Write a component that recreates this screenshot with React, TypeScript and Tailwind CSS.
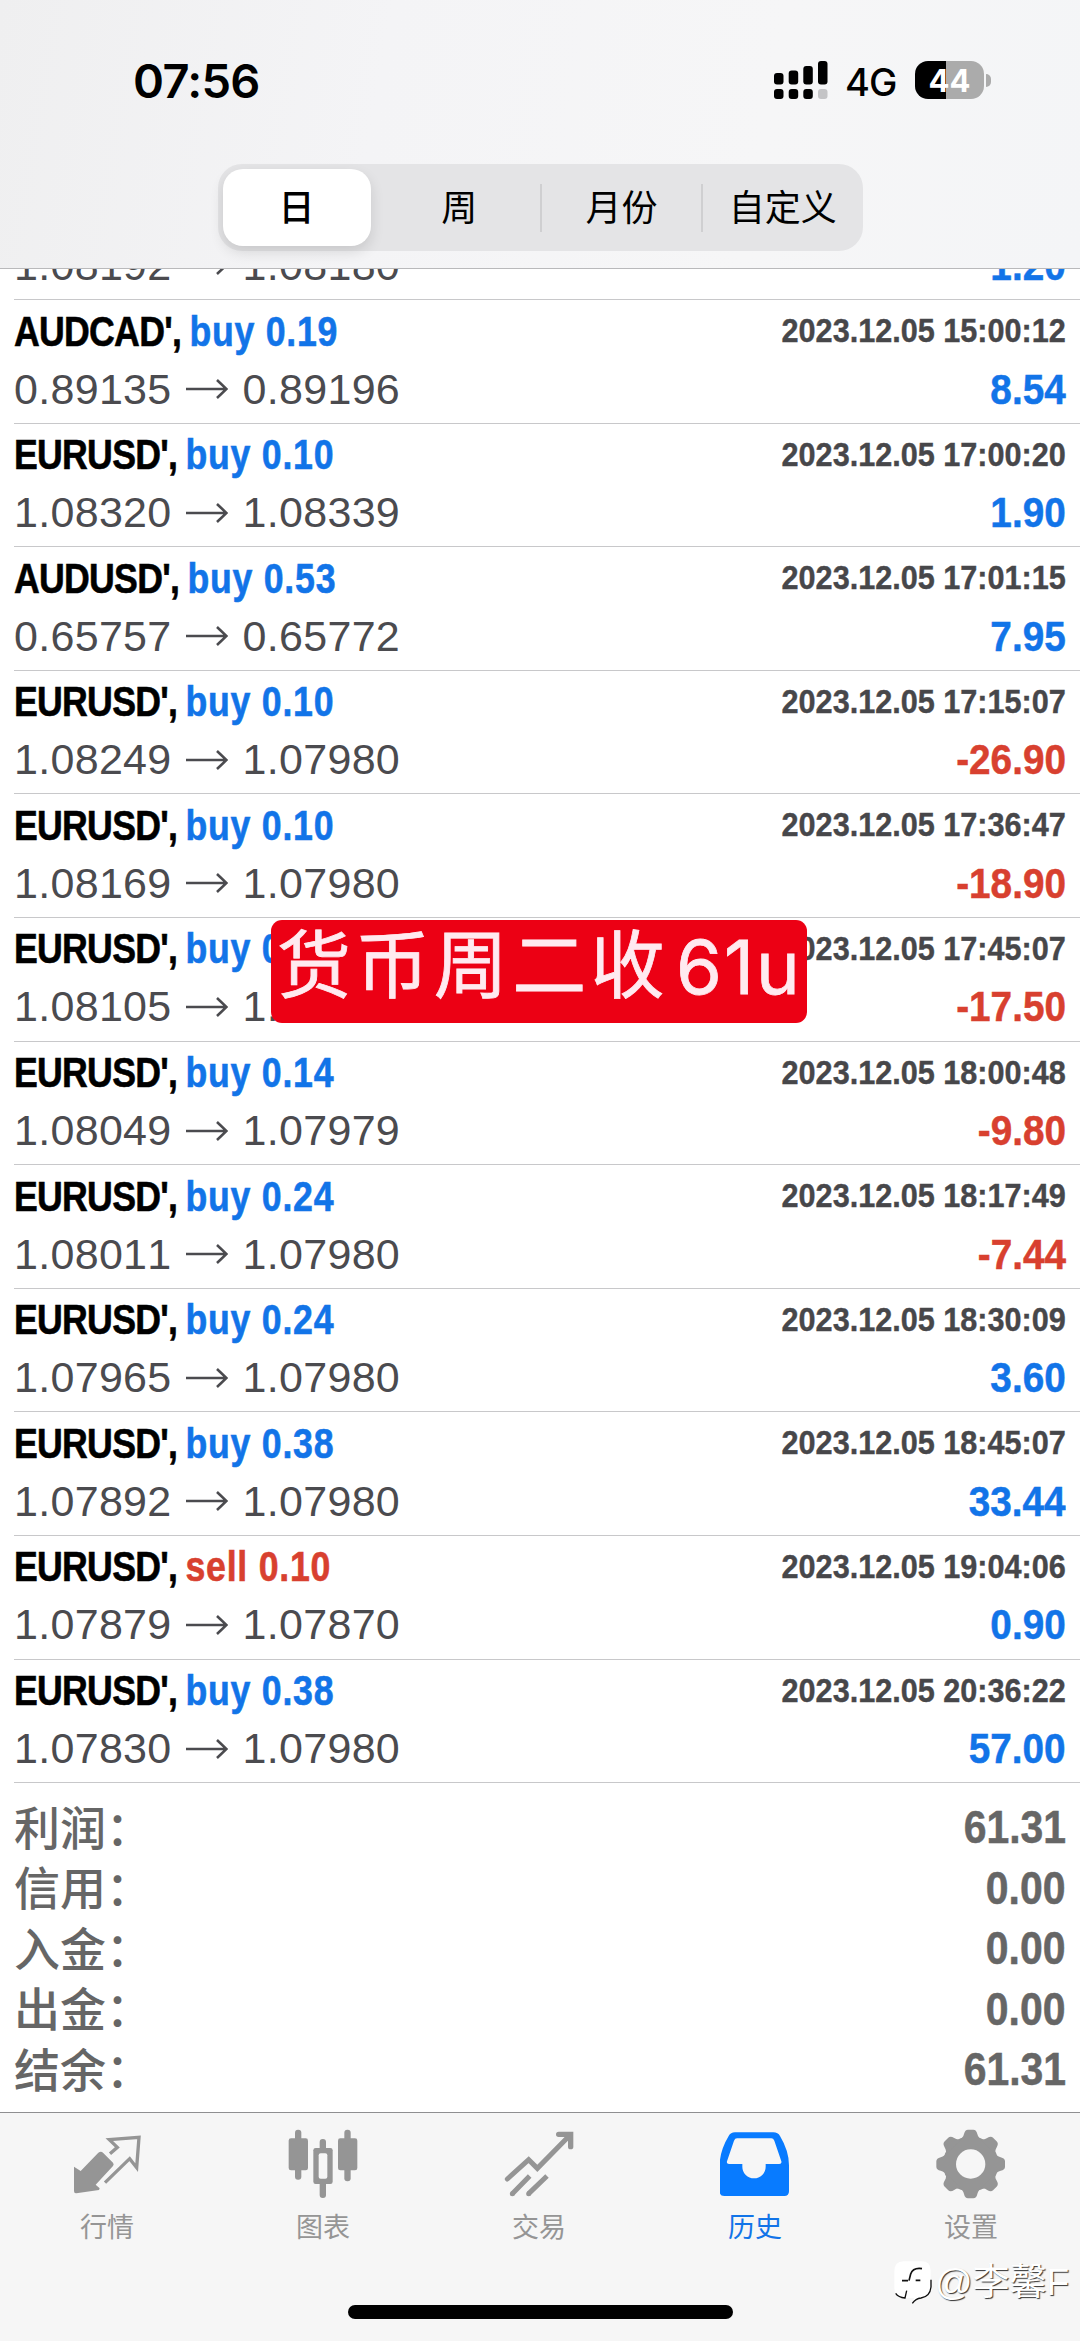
import type { ReactNode } from "react";

type Trade = {
  symbol: string;
  side: "buy" | "sell";
  lots: string;
  open: string;
  close: string;
  time: string;
  profit: string;
};

const trades: Trade[] = [
  { symbol: "AUDCAD'", side: "buy", lots: "0.19", open: "0.89135", close: "0.89196", time: "2023.12.05 15:00:12", profit: "8.54" },
  { symbol: "EURUSD'", side: "buy", lots: "0.10", open: "1.08320", close: "1.08339", time: "2023.12.05 17:00:20", profit: "1.90" },
  { symbol: "AUDUSD'", side: "buy", lots: "0.53", open: "0.65757", close: "0.65772", time: "2023.12.05 17:01:15", profit: "7.95" },
  { symbol: "EURUSD'", side: "buy", lots: "0.10", open: "1.08249", close: "1.07980", time: "2023.12.05 17:15:07", profit: "-26.90" },
  { symbol: "EURUSD'", side: "buy", lots: "0.10", open: "1.08169", close: "1.07980", time: "2023.12.05 17:36:47", profit: "-18.90" },
  { symbol: "EURUSD'", side: "buy", lots: "0.10", open: "1.08105", close: "1.07980", time: "2023.12.05 17:45:07", profit: "-17.50" },
  { symbol: "EURUSD'", side: "buy", lots: "0.14", open: "1.08049", close: "1.07979", time: "2023.12.05 18:00:48", profit: "-9.80" },
  { symbol: "EURUSD'", side: "buy", lots: "0.24", open: "1.08011", close: "1.07980", time: "2023.12.05 18:17:49", profit: "-7.44" },
  { symbol: "EURUSD'", side: "buy", lots: "0.24", open: "1.07965", close: "1.07980", time: "2023.12.05 18:30:09", profit: "3.60" },
  { symbol: "EURUSD'", side: "buy", lots: "0.38", open: "1.07892", close: "1.07980", time: "2023.12.05 18:45:07", profit: "33.44" },
  { symbol: "EURUSD'", side: "sell", lots: "0.10", open: "1.07879", close: "1.07870", time: "2023.12.05 19:04:06", profit: "0.90" },
  { symbol: "EURUSD'", side: "buy", lots: "0.38", open: "1.07830", close: "1.07980", time: "2023.12.05 20:36:22", profit: "57.00" },
];

const summary = [
  { label: "利润", value: "61.31" },
  { label: "信用", value: "0.00" },
  { label: "入金", value: "0.00" },
  { label: "出金", value: "0.00" },
  { label: "结余", value: "61.31" },
];

const periods = ["日", "周", "月份", "自定义"];

const blue = "text-[#1274e8]";
const red = "text-[#d8402f]";

const StatusBar = () => (
  <div className="flex h-[160px] items-center justify-between pl-[133px] pr-[89px]">
    <span className="font-['Inter',sans-serif] text-[47px] font-semibold leading-none tracking-[-0.7px]">07:56</span>
    <div className="flex items-center">
      <svg className="h-[38px] w-[54px]" viewBox="0 0 54 38">
        <rect x="0" y="12" width="9.5" height="11.5" rx="3" />
        <rect x="14.7" y="9.5" width="9.5" height="14" rx="3" />
        <rect x="29.3" y="5" width="9.5" height="18.5" rx="3" />
        <rect x="44" y="0" width="9.5" height="23.5" rx="3" />
        <rect x="0" y="28" width="9.5" height="10" rx="3" />
        <rect x="14.7" y="28" width="9.5" height="10" rx="3" />
        <rect x="29.3" y="28" width="9.5" height="10" rx="3" />
        <rect x="44" y="28" width="9.5" height="10" rx="3" fill="#c4c4c6" />
      </svg>
      <span className="ml-[17px] w-[70px] pt-[3px] font-['Inter',sans-serif] text-[38px] font-medium leading-none tracking-[-1px]">4G</span>
      <div className="flex h-[38px] w-[69px] items-center justify-center rounded-[13px] bg-[linear-gradient(90deg,#000_31px,#ababab_31px)]">
        <span className="font-['Inter',sans-serif] text-[31px] font-bold leading-none text-white">44</span>
      </div>
      <div className="ml-[2px] h-[13px] w-[5px] rounded-r-full bg-[#ababab]" />
    </div>
  </div>
);

const Segmented = () => (
  <div className="mx-auto grid h-[87px] w-[645px] grid-cols-4 rounded-[24px] bg-[#e4e4e6] text-[36px] leading-none">
    {periods.map((period, index) => (
      <div key={period} className="flex items-center">
        {index > 1 && <div className="h-[48px] w-[2px] bg-[#cfcfd1]" />}
        <div
          className={
            index === 0
              ? "ml-[5px] flex h-[77px] w-[148px] items-center justify-center rounded-[20px] bg-white pt-[2px] font-medium shadow-[0_6px_14px_rgba(0,0,0,0.12)]"
              : "flex h-full flex-1 items-center justify-center pt-[2px]"
          }
        >
          {period}
        </div>
      </div>
    ))}
  </div>
);

const Arrow = () => (
  <svg className="ml-[14px] mr-[15px] h-[24px] w-[42px]" viewBox="0 0 42 24" fill="none" stroke="#4b4b4f" strokeWidth="2.6">
    <path d="M0 12h40M31 3l9.5 9L31 21" />
  </svg>
);

const PriceLine = ({ open, close, profit }: { open: string; close: string; profit: string }) => (
  <div className="flex h-[58px] items-center justify-between whitespace-nowrap text-[43px] leading-none [font-kerning:none]">
    <div className="flex items-center tracking-[0.3px] text-[#4b4b4f]">
      {open}
      <Arrow />
      {close}
    </div>
    <div
      className={`origin-right scale-x-[0.9] font-bold [-webkit-text-stroke:0.5px_currentColor] ${profit.startsWith("-") ? red : blue}`}
    >
      {profit}
    </div>
  </div>
);

const TradeRow = ({ trade }: { trade: Trade }) => (
  <div className="ml-[14px] h-[123.6px] border-b border-[#c8c8ca] pr-[14px] pt-[2px]">
    <div className="flex h-[58px] items-center justify-between whitespace-nowrap font-bold [font-kerning:none]">
      <div className="origin-left scale-x-[0.83] text-[43px] leading-none [-webkit-text-stroke:0.6px_currentColor]">
        <span className="tracking-[-0.9px]">{trade.symbol},</span>
        <span className={`ml-[10px] tracking-[0.9px] ${trade.side === "buy" ? blue : red}`}>
          {trade.side} {trade.lots}
        </span>
      </div>
      <div className="origin-right scale-x-[0.9] pb-[2px] text-[34px] leading-none text-[#47474a] [-webkit-text-stroke:0.4px_currentColor]">
        {trade.time}
      </div>
    </div>
    <PriceLine open={trade.open} close={trade.close} profit={trade.profit} />
  </div>
);

const QuotesIcon = () => (
  <svg className="h-[72px] w-[72px]" viewBox="216 115 216 216">
    <path d="M222 231l20 13 53-55q8-6 14 0l30 30q4 5 0 10l-52 56 12 11-2 5-68 10q-7 1-7-7z" fill="#959595" />
    <path d="M330 192l22-19-24-23 89-7-7 91-21-27-74 72" fill="none" stroke="#959595" strokeWidth="10" />
  </svg>
);

const ChartIcon = () => (
  <svg className="h-[72px] w-[72px]" viewBox="864 115 216 216" fill="#959595">
    <rect x="885" y="120" width="19" height="150" rx="9" />
    <rect x="866" y="146" width="58" height="96" rx="7" />
    <rect x="1033" y="120" width="19" height="155" rx="9" />
    <rect x="1014" y="146" width="58" height="96" rx="7" />
    <rect x="959" y="148" width="19" height="177" rx="9" />
    <rect x="940" y="175" width="58" height="108" rx="7" />
    <rect x="956" y="191" width="26" height="76" rx="6" fill="#f6f6f6" />
  </svg>
);

const TradeIcon = () => (
  <svg className="h-[72px] w-[72px]" viewBox="432 115 216 216" fill="none" stroke="#959595" strokeWidth="15">
    <path d="M442 268l64-58 26 26 99-101" strokeLinecap="round" />
    <path d="M596 134h36v37" strokeLinecap="round" strokeWidth="16" />
    <path d="M457 312l52-53M506 312l55-53" />
    <g fill="#959595" stroke="none">
      <circle cx="457" cy="312" r="7.5" />
      <circle cx="506" cy="312" r="7.5" />
    </g>
  </svg>
);

const HistoryIcon = () => (
  <svg className="h-[72px] w-[72px]" viewBox="0 115 216 216">
    <path
      fill="#087bff"
      fillRule="evenodd"
      d="M45 128h115q14 0 20 11 27 45 27 88v78q0 14-14 14H13q-14 0-14-14v-78q0-43 27-88 6-11 19-11zM51 146q-6 0-9 7l-21 62q-2 8 6 8h40v8a35 35 0 0 0 70 0v-8h41q8 0 6-8l-21-62q-3-7-9-7z"
    />
  </svg>
);

const SettingsIcon = () => (
  <svg className="h-[72px] w-[72px]" viewBox="648 115 216 216">
    <g fill="#959595">
      <circle cx="752" cy="223" r="83" />
      {[0, 45, 90, 135, 180, 225, 270, 315].map((angle) => (
        <path
          key={angle}
          transform={`rotate(${angle} 752 223)`}
          d="M717 150q12-4 15-17 3-13 12-13h16q9 0 12 13 3 13 15 17z"
        />
      ))}
    </g>
    <circle cx="752" cy="223" r="44" fill="#f6f6f6" />
  </svg>
);

const tabs: { label: string; icon: ReactNode; active?: boolean }[] = [
  { label: "行情", icon: <QuotesIcon /> },
  { label: "图表", icon: <ChartIcon /> },
  { label: "交易", icon: <TradeIcon /> },
  { label: "历史", icon: <HistoryIcon />, active: true },
  { label: "设置", icon: <SettingsIcon /> },
];

const Watermark = () => (
  <div className="absolute left-[893px] top-[2259px] flex items-center whitespace-nowrap">
    <svg className="h-[47px] w-[40px]" viewBox="518 508 120 141">
      <path d="M550 515h54q27 0 27 28v46q0 30-29 35l-26 16 5-15h-31q-28 0-28-30v-50q0-30 28-30z" fill="#fff" />
      <g fill="none" stroke="#111">
        <path d="M605 537q-27-4-34 16l-5 20" strokeWidth="5" />
        <path d="M545 573h18M586 572h14" strokeWidth="5" />
        <path d="M632 570v22q-3 29-30 33-16 2-26 16M526 611q8 12 28 14l5-22" strokeWidth="4" />
      </g>
    </svg>
    <span className="ml-[2px] text-[37px] leading-[46px] text-white [text-shadow:1px_1px_1px_#333]">@李馨F</span>
  </div>
);

const App = () => {
  return (
    <div className="relative flex h-[2341px] w-[1080px] flex-col overflow-hidden bg-white font-['Liberation_Sans','Noto_Sans_CJK_SC',sans-serif] text-black">
      {/* Header */}
      <header className="z-10 h-[269px] shrink-0 border-b border-[#b9b9bb] bg-[linear-gradient(100deg,#efeff0_0%,#f4f4f6_35%,#f6f6f7_70%,#f4f5f7_100%)]">
        <StatusBar />
        <div className="pt-[4px]">
          <Segmented />
        </div>
      </header>

      {/* History list, scrolled under the header */}
      <main className="h-[1843px] shrink-0 overflow-hidden">
        <div className="-mt-[33px] ml-[14px] h-[64px] border-b border-[#c8c8ca] pr-[14px]">
          <PriceLine open="1.08192" close="1.08180" profit="1.20" />
        </div>
        {trades.map((trade) => (
          <TradeRow key={trade.time} trade={trade} />
        ))}
        <div className="px-[14px] pt-[14px] text-[#666]">
          {summary.map((item) => (
            <div key={item.label} className="flex h-[60.5px] items-center justify-between">
              <span className="pb-[5px] font-['Noto_Sans_CJK_SC',sans-serif] text-[46px] font-medium leading-none">
                {item.label}：
              </span>
              <span className="origin-right scale-x-[0.89] text-[46px] font-bold leading-none [-webkit-text-stroke:0.5px_currentColor]">
                {item.value}
              </span>
            </div>
          ))}
        </div>
      </main>

      {/* Tab bar */}
      <nav className="flex flex-1 flex-col items-center border-t border-[#8f8f91] bg-[#f6f6f6]">
        <div className="grid w-full grid-cols-5 pt-[15px]">
          {tabs.map((tab) => (
            <div key={tab.label} className="flex flex-col items-center">
              {tab.icon}
              <span
                className={`mr-[2px] mt-[13px] text-[27px] leading-[30px] ${tab.active ? "text-[#1274e8]" : "text-[#959595]"}`}
              >
                {tab.label}
              </span>
            </div>
          ))}
        </div>
        <div className="mt-[62px] h-[14px] w-[385px] rounded-full bg-black" />
      </nav>

      {/* Caption sticker */}
      <div className="absolute left-[271px] top-[920px] flex h-[103px] w-[536px] items-center whitespace-nowrap rounded-[11px] bg-[#ec0014] pb-[10px] pl-[6px] text-[74px] leading-none text-[#ffeaf0] [-webkit-text-stroke:0.8px_currentColor]">
        <span className="tracking-[4.4px]">货币周二收</span>
        <span className="ml-[7px] font-['Inter',sans-serif] tracking-[2px]">61u</span>
      </div>

      <Watermark />
    </div>
  );
};

export default App;
